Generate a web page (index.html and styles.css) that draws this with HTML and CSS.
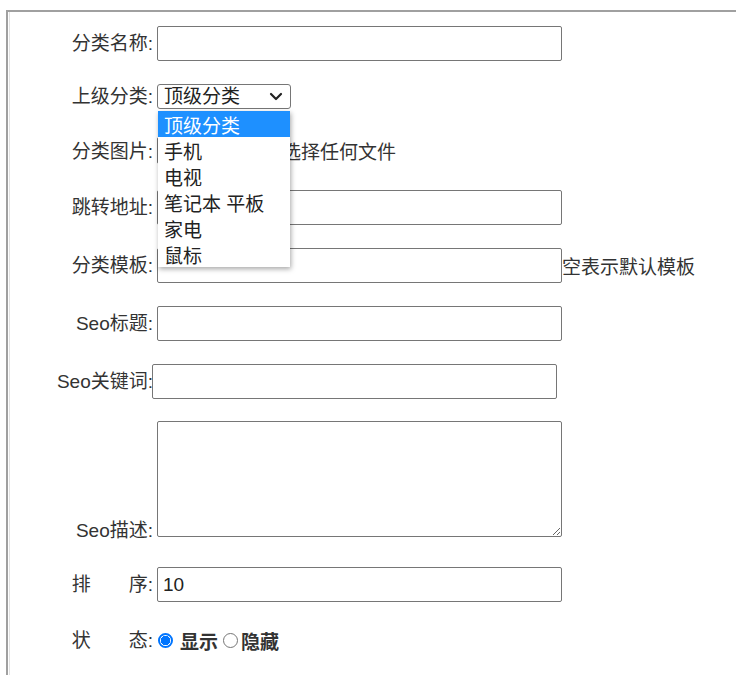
FILE: index.html
```html
<!DOCTYPE html>
<html lang="zh-CN">
<head>
<meta charset="utf-8">
<title>分类编辑</title>
<link rel="stylesheet" href="styles.css">
</head>
<body>
<div class="frame">
  <div class="inner">
    <form class="form">
      <div class="row">
        <label class="lbl">分类名称:</label>
        <input class="txt ctl" type="text">
      </div>
      <div class="row row-select">
        <label class="lbl">上级分类:</label>
        <div class="select-wrap ctl">
          <div class="select">
            <span>顶级分类</span>
            <svg class="chev" width="14" height="9" viewBox="0 0 14 9"><path d="M2 2 L7 7 L12 2" fill="none" stroke="#222" stroke-width="2.2" stroke-linecap="round" stroke-linejoin="round"/></svg>
          </div>
          <ul class="popup">
            <li class="opt sel">顶级分类</li>
            <li class="opt">手机</li>
            <li class="opt">电视</li>
            <li class="opt">笔记本 平板</li>
            <li class="opt">家电</li>
            <li class="opt">鼠标</li>
          </ul>
        </div>
      </div>
      <div class="row row-file">
        <label class="lbl">分类图片:</label>
        <div class="file ctl">
          <span class="file-btn">选择文件</span>
          <span class="file-name">未选择任何文件</span>
        </div>
      </div>
      <div class="row row-next">
        <label class="lbl">跳转地址:</label>
        <input class="txt ctl" type="text">
      </div>
      <div class="row">
        <label class="lbl">分类模板:</label>
        <input class="txt ctl" type="text">
        <span class="hint">空表示默认模板</span>
      </div>
      <div class="row">
        <label class="lbl">Seo标题:</label>
        <input class="txt ctl" type="text">
      </div>
      <div class="row row-tight">
        <label class="lbl">Seo关键词:</label>
        <input class="txt ctl" type="text">
      </div>
      <div class="row row-area">
        <label class="lbl">Seo描述:</label>
        <textarea class="area ctl"></textarea>
      </div>
      <div class="row row-sort">
        <label class="lbl">排&emsp;&emsp;序:</label>
        <input class="txt ctl" type="text" value="10">
      </div>
      <div class="row row-status">
        <label class="lbl">状&emsp;&emsp;态:</label>
        <div class="radios ctl">
          <span class="radio on"></span><b class="rtext">显示</b>
          <span class="radio off"></span><b class="rtext">隐藏</b>
        </div>
      </div>
    </form>
  </div>
</div>
</body>
</html>
```
FILE: styles.css
```css
html, body {
  margin: 0;
  padding: 0;
  background: #fff;
}
body {
  font-family: "Liberation Sans", "Noto Sans CJK SC", sans-serif;
  font-size: 19px;
  color: #333;
  overflow: hidden;
  height: 675px;
}
.frame {
  box-sizing: border-box;
  margin: 10px 0 0 6px;
  border-top: 2px solid #a0a0a0;
  border-left: 2px solid #a0a0a0;
  height: 665px;
}
.inner {
  box-sizing: border-box;
  margin-left: 1px;
  border-left: 1px solid #e2e2e2;
  height: 100%;
}
.form {
  display: flex;
  flex-direction: column;
  align-items: flex-start;
  padding-top: 14px;
}
.row {
  display: flex;
  align-items: center;
  height: 35px;
}
.row + .row {
  margin-top: 23px;
}
.lbl {
  width: 143px;
  flex: none;
  text-align: right;
  white-space: nowrap;
  line-height: 25px;
}
.ctl {
  margin-left: 4px;
}
.row-tight .ctl {
  margin-left: -1px;
}
.txt {
  box-sizing: border-box;
  width: 405px;
  height: 35px;
  border: 1px solid #767676;
  border-radius: 2px;
  padding: 0 5px;
  font: inherit;
  color: #222;
  background: #fff;
  outline: none;
}
.hint {
  white-space: nowrap;
}

/* select */
.row-select {
  height: 25px;
}
.select-wrap {
  position: relative;
}
.select {
  box-sizing: border-box;
  width: 134px;
  height: 25px;
  border: 1px solid #767676;
  border-radius: 3px;
  display: flex;
  align-items: center;
  justify-content: space-between;
  padding: 0 7px 0 6px;
  line-height: 23px;
  color: #222;
}
.chev {
  display: block;
}
.popup {
  position: absolute;
  left: 1px;
  top: 27px;
  width: 132px;
  margin: 0;
  padding: 0;
  list-style: none;
  background: #fff;
  box-shadow: 1px 2px 5px rgba(0, 0, 0, 0.35);
  z-index: 5;
}
.opt {
  box-sizing: border-box;
  height: 26px;
  padding: 5px 0 0 6px;
  line-height: 21px;
  color: #222;
  white-space: nowrap;
}
.opt.sel {
  background: #1e90ff;
  color: #fff;
}

/* file */
.row-file {
  align-items: flex-end;
}
.file {
  display: flex;
  align-items: center;
  height: 27px;
  margin-bottom: 3px;
}
.row-file .lbl {
  margin-bottom: 3px;
}
.file-btn {
  box-sizing: border-box;
  height: 27px;
  padding: 0 12px;
  border: 1px solid #767676;
  border-radius: 2px;
  background: #efefef;
  line-height: 25px;
  color: #222;
}
.file-name {
  margin-left: 4px;
}

/* textarea */
.row-area {
  height: 116px;
  align-items: flex-end;
}
.row + .row-area {
  margin-top: 22px;
}
.row-area .lbl {
  line-height: 20px;
  margin-bottom: -4px;
}
.area {
  box-sizing: border-box;
  width: 405px;
  height: 116px;
  border: 1px solid #767676;
  border-radius: 2px;
  font: inherit;
  resize: both;
  outline: none;
}
.row + .row-sort {
  margin-top: 30px;
}

/* status */
.row-status {
  height: 30px;
}
.radios {
  display: flex;
  align-items: center;
}
.radio {
  box-sizing: border-box;
  width: 15px;
  height: 15px;
  border-radius: 50%;
  flex: none;
}
.radio.on {
  margin-left: 1px;
  border: 2px solid #0075ff;
  background: radial-gradient(circle, #0075ff 0 4.5px, #fff 5px);
}
.radio.off {
  margin-left: 5px;
  border: 1px solid #767676;
  background: #fff;
}
.rtext {
  font-weight: bold;
  color: #333;
}
.radio.on + .rtext {
  margin-left: 7px;
}
.radio.off + .rtext {
  margin-left: 3px;
}
```
